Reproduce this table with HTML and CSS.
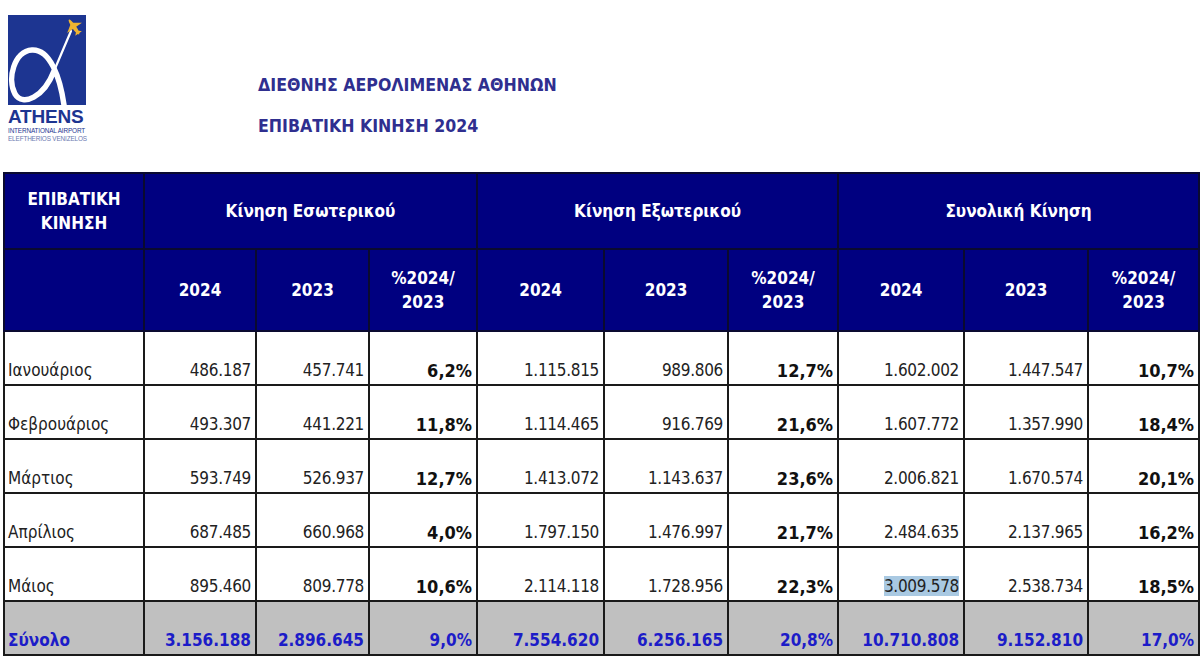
FILE: index.html
```html
<!DOCTYPE html>
<html lang="el">
<head>
<meta charset="utf-8">
<title>Επιβατική Κίνηση 2024</title>
<link rel="stylesheet" href="styles.css">
</head>
<body>
<header class="top">
  <div class="logo">
    <svg class="logo-mark" width="78" height="90" viewBox="0 0 78 90" aria-hidden="true">
      <rect x="0" y="0" width="78" height="90" fill="#1d3591"/>
      <path d="M56,90 C52,62 42,34 24,35 C6,36 -1,64 7,79 C15,92 36,82 46,56" fill="none" stroke="#fff" stroke-width="5.5" stroke-linecap="round"/>
      <path d="M46,56 L63,16" fill="none" stroke="#fff" stroke-width="2.2" stroke-linecap="round"/>
      <g transform="translate(66,12) rotate(-35)" fill="#f0b431">
        <ellipse cx="0" cy="0" rx="2" ry="9"/>
        <polygon points="-9,1 9,1 1.5,-4 -1.5,-4"/>
        <polygon points="-4,8 4,8 1,5 -1,5"/>
      </g>
    </svg>
    <div class="logo-name">ATHENS</div>
    <div class="logo-sub">INTERNATIONAL AIRPORT</div>
    <div class="logo-sub2">ELEFTHERIOS VENIZELOS</div>
  </div>
  <div class="titles">
    <h1 class="title">ΔΙΕΘΝΗΣ ΑΕΡΟΛΙΜΕΝΑΣ ΑΘΗΝΩΝ</h1>
    <h2 class="title">ΕΠΙΒΑΤΙΚΗ ΚΙΝΗΣΗ 2024</h2>
  </div>
</header>

<table class="stats">
  <colgroup>
    <col class="c-label">
    <col class="c112"><col class="c113"><col class="c108">
    <col class="c127"><col class="c124"><col class="c110">
    <col class="c126"><col class="c124"><col class="c111">
  </colgroup>
  <thead>
    <tr class="h1">
      <th>ΕΠΙΒΑΤΙΚΗ<br>ΚΙΝΗΣΗ</th>
      <th colspan="3">Κίνηση Εσωτερικού</th>
      <th colspan="3">Κίνηση Εξωτερικού</th>
      <th colspan="3">Συνολική Κίνηση</th>
    </tr>
    <tr class="h2">
      <th></th>
      <th>2024</th><th>2023</th><th>%2024/<br>2023</th>
      <th>2024</th><th>2023</th><th>%2024/<br>2023</th>
      <th>2024</th><th>2023</th><th>%2024/<br>2023</th>
    </tr>
  </thead>
  <tbody>
    <tr>
      <td class="m">Ιανουάριος</td>
      <td>486.187</td><td>457.741</td><td class="p">6,2%</td>
      <td>1.115.815</td><td>989.806</td><td class="p">12,7%</td>
      <td>1.602.002</td><td>1.447.547</td><td class="p">10,7%</td>
    </tr>
    <tr>
      <td class="m">Φεβρουάριος</td>
      <td>493.307</td><td>441.221</td><td class="p">11,8%</td>
      <td>1.114.465</td><td>916.769</td><td class="p">21,6%</td>
      <td>1.607.772</td><td>1.357.990</td><td class="p">18,4%</td>
    </tr>
    <tr>
      <td class="m">Μάρτιος</td>
      <td>593.749</td><td>526.937</td><td class="p">12,7%</td>
      <td>1.413.072</td><td>1.143.637</td><td class="p">23,6%</td>
      <td>2.006.821</td><td>1.670.574</td><td class="p">20,1%</td>
    </tr>
    <tr>
      <td class="m">Απρίλιος</td>
      <td>687.485</td><td>660.968</td><td class="p">4,0%</td>
      <td>1.797.150</td><td>1.476.997</td><td class="p">21,7%</td>
      <td>2.484.635</td><td>2.137.965</td><td class="p">16,2%</td>
    </tr>
    <tr>
      <td class="m">Μάιος</td>
      <td>895.460</td><td>809.778</td><td class="p">10,6%</td>
      <td>2.114.118</td><td>1.728.956</td><td class="p">22,3%</td>
      <td><span class="sel">3.009.578</span></td><td>2.538.734</td><td class="p">18,5%</td>
    </tr>
    <tr class="total">
      <td class="m">Σύνολο</td>
      <td>3.156.188</td><td>2.896.645</td><td>9,0%</td>
      <td>7.554.620</td><td>6.256.165</td><td>20,8%</td>
      <td>10.710.808</td><td>9.152.810</td><td>17,0%</td>
    </tr>
  </tbody>
</table>
</body>
</html>
```

FILE: styles.css
```css
html, body {
  margin: 0;
  padding: 0;
  background: #ffffff;
}

body {
  font-family: "DejaVu Sans Condensed", "DejaVu Sans", sans-serif;
  color: #222222;
  width: 1200px;
  height: 660px;
  overflow: hidden;
}

.top {
  display: flex;
  height: 172px;
}

.logo {
  margin: 15px 0 0 8px;
  width: 78px;
  display: flex;
  flex-direction: column;
  align-items: flex-start;
}

.logo-mark {
  display: block;
}

.logo-name {
  margin-top: 2px;
  font-family: "Liberation Sans", Arial, sans-serif;
  font-weight: bold;
  font-size: 19px;
  line-height: 20px;
  letter-spacing: -0.2px;
  color: #1d3591;
}

.logo-sub,
.logo-sub2 {
  font-family: "Liberation Sans", Arial, sans-serif;
  font-size: 6.4px;
  line-height: 7.5px;
  letter-spacing: -0.15px;
  white-space: nowrap;
  color: #1d3591;
}

.logo-sub2 {
  color: #6a78b0;
}

.titles {
  margin-left: 172px;
  padding-top: 73px;
  display: flex;
  flex-direction: column;
  gap: 16px;
}

.title {
  margin: 0;
  font-size: 17.6px;
  line-height: 25px;
  font-weight: bold;
  color: #2f2f8f;
}

.stats {
  margin-left: 3px;
  border-collapse: collapse;
  table-layout: fixed;
  width: 1195px;
  font-size: 17px;
}

.c-label { width: 140px; }
.c108 { width: 108px; }
.c110 { width: 110px; }
.c111 { width: 111px; }
.c112 { width: 112px; }
.c113 { width: 113px; }
.c124 { width: 124px; }
.c126 { width: 126px; }
.c127 { width: 127px; }

.stats th,
.stats td {
  border: 2px solid #1a1a1a;
  padding: 0 4px;
}

.stats th {
  background: #000080;
  color: #ffffff;
  font-weight: bold;
  font-size: 17px;
  line-height: 24px;
  text-align: center;
  vertical-align: middle;
  border-color: #0a0a30;
}

.stats .h1 th {
  height: 74px;
}

.stats .h2 th {
  height: 80px;
}

.stats td {
  height: 50px;
  text-align: right;
  vertical-align: bottom;
  padding-bottom: 2px;
  line-height: 23px;
  letter-spacing: -0.3px;
  white-space: nowrap;
}

.stats td.m {
  text-align: left;
  padding-left: 3px;
  letter-spacing: 0;
}

.stats td.p {
  font-weight: bold;
  font-size: 18px;
  letter-spacing: 0;
  color: #111111;
}

.sel {
  background: #a9c9e2;
}

.stats .total td {
  background: #c0c0c0;
  color: #1c1cc8;
  font-weight: bold;
  font-size: 17px;
  letter-spacing: 0;
}
```
